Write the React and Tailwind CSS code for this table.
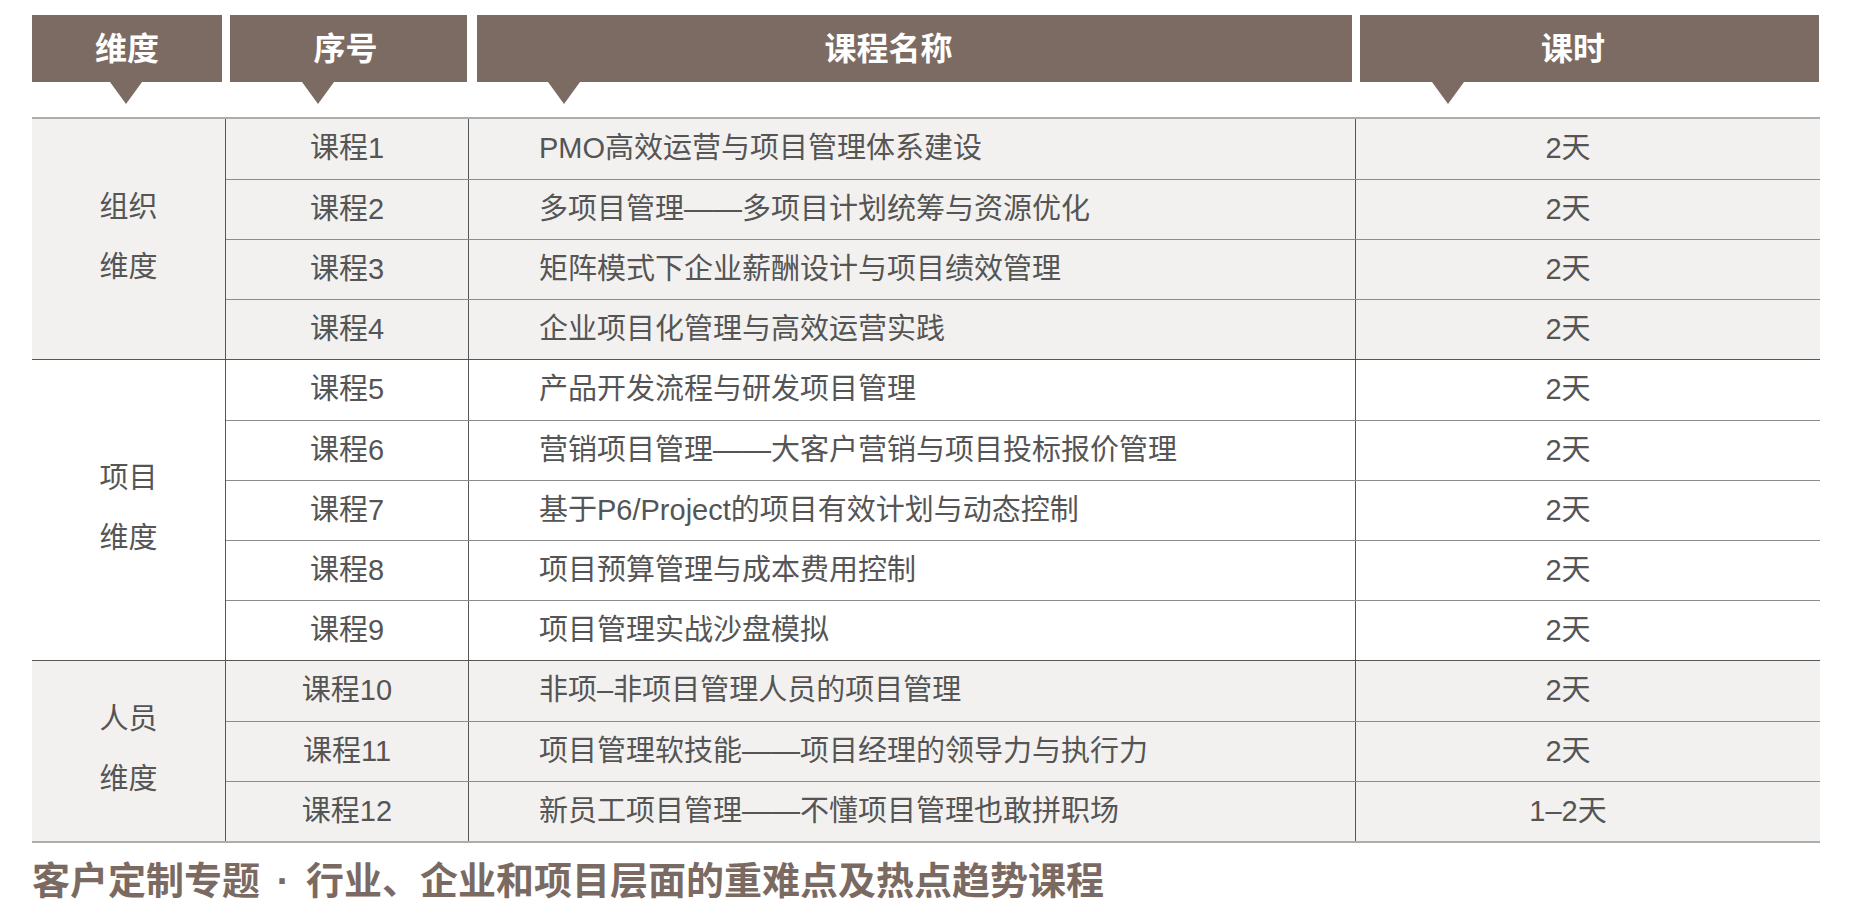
import React from 'react';

const font = { fontFamily: '"Liberation Sans", "Noto Sans CJK SC", sans-serif' };

const headers = [
    { label: '维度', box: 'w-[190px]', text: 'pl-[0px]', tri: 'ml-[78px]' },
    { label: '序号', box: 'w-[237px] ml-[8px]', text: 'pr-[6px]', tri: 'ml-[72px]' },
    { label: '课程名称', box: 'w-[875px] ml-[10px]', text: 'pr-[52px]', tri: 'ml-[71px]' },
    { label: '课时', box: 'w-[459px] ml-[8px]', text: 'pr-[33px]', tri: 'ml-[72px]' },
];

const groups = [
    {
        dim: ['组织', '维度'],
        bg: 'bg-[#f2f1ef]',
        rows: [
            ['课程1', 'PMO高效运营与项目管理体系建设', '2天'],
            ['课程2', '多项目管理——多项目计划统筹与资源优化', '2天'],
            ['课程3', '矩阵模式下企业薪酬设计与项目绩效管理', '2天'],
            ['课程4', '企业项目化管理与高效运营实践', '2天'],
        ],
    },
    {
        dim: ['项目', '维度'],
        bg: 'bg-white',
        rows: [
            ['课程5', '产品开发流程与研发项目管理', '2天'],
            ['课程6', '营销项目管理——大客户营销与项目投标报价管理', '2天'],
            ['课程7', '基于P6/Project的项目有效计划与动态控制', '2天'],
            ['课程8', '项目预算管理与成本费用控制', '2天'],
            ['课程9', '项目管理实战沙盘模拟', '2天'],
        ],
    },
    {
        dim: ['人员', '维度'],
        bg: 'bg-[#f2f1ef]',
        rows: [
            ['课程10', '非项–非项目管理人员的项目管理', '2天'],
            ['课程11', '项目管理软技能——项目经理的领导力与执行力', '2天'],
            ['课程12', '新员工项目管理——不懂项目管理也敢拼职场', '1–2天'],
        ],
    },
];

export default function App() {
    return (
        <div className="w-[1856px] h-[923px] bg-white pt-[15px] pl-[32px] overflow-hidden" style={font}>
            {/* header tabs */}
            <div className="flex">
                {headers.map(h => (
                    <div key={h.label} className={`flex flex-col ${h.box}`}>
                        <div className={`h-[67px] bg-[#7c6b62] flex items-center justify-center text-white text-[32px] font-bold ${h.text}`}>
                            {h.label}
                        </div>
                        <div className={`w-0 h-0 border-l-[16px] border-r-[16px] border-t-[22px] border-l-transparent border-r-transparent border-t-[#7c6b62] ${h.tri}`} />
                    </div>
                ))}
            </div>

            {/* table */}
            <div className="mt-[13px] w-[1788px] border-t-2 border-b-2 border-[#adadad] text-[#555] text-[29px]">
                {groups.map((g, gi) => (
                    <div key={gi} className={`flex ${g.bg} ${gi > 0 ? 'border-t border-[#555]' : ''}`}>
                        <div className="w-[194px] shrink-0 border-r border-[#555] flex flex-col items-center justify-center leading-[60px] pb-[4px]">
                            <span>{g.dim[0]}</span>
                            <span>{g.dim[1]}</span>
                        </div>
                        <div className="flex-1 flex flex-col">
                            {g.rows.map((r, ri) => (
                                <div key={r[0]} className={`grid grid-cols-[243px_887px_1fr] h-[60px] ${ri > 0 ? 'border-t border-[#8c8c8c]' : ''}`}>
                                    <div className="border-r border-[#555] flex items-center justify-center">{r[0]}</div>
                                    <div className="border-r border-[#555] flex items-center pl-[70px]">{r[1]}</div>
                                    <div className="flex items-center justify-center pr-[40px]">{r[2]}</div>
                                </div>
                            ))}
                        </div>
                    </div>
                ))}
            </div>

            <div className="mt-[15px] text-[38px] font-bold text-[#7b6a62] leading-[46px]">
                客户定制专题<span className="inline-block w-[46px] text-center">·</span>行业、企业和项目层面的重难点及热点趋势课程
            </div>
        </div>
    );
}
